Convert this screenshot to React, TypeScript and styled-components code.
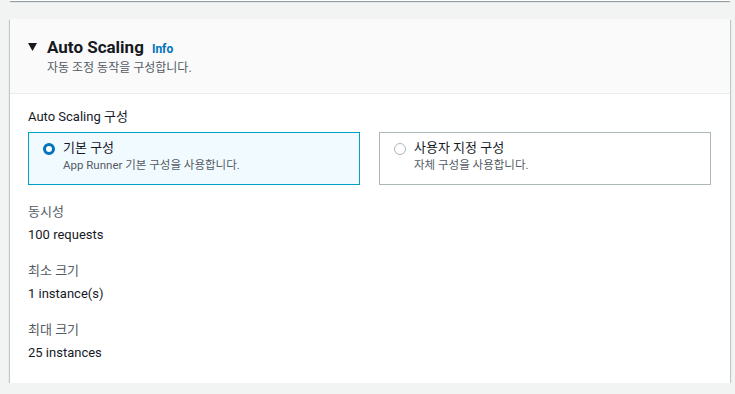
import React from "react";
import styled, { createGlobalStyle } from "styled-components";

const Global = createGlobalStyle`
  html, body { margin: 0; padding: 0; background: #f2f3f3; }
  body { font-family: Roboto, "Noto Sans CJK KR", sans-serif; color: #16191f; }
`;

const Page = styled.div`
  padding: 0 5px 0 10px;
  display: flex;
  flex-direction: column;
  gap: 18px;
`;

const PrevCard = styled.div`
  height: 1px;
  background: #fff;
  box-shadow: 0 1px 1px 0 rgba(0, 28, 36, 0.5);
`;

const Card = styled.section`
  background: #fff;
  box-shadow: 0 1px 1px 0 rgba(0, 28, 36, 0.4), 1px 1px 1px 0 rgba(0, 28, 36, 0.15),
    -1px 1px 1px 0 rgba(0, 28, 36, 0.15);
`;

const Header = styled.header`
  background: #fafafa;
  border-bottom: 1px solid #eaeded;
  padding: 17px 20px 17px 18px;
  display: flex;
  gap: 10px;
`;

const Caret = styled.svg`
  width: 9px;
  height: 8px;
  margin-top: 7px;
  flex-shrink: 0;
`;

const HeadText = styled.div`
  display: flex;
  flex-direction: column;
`;

const TitleRow = styled.div`
  display: flex;
  align-items: baseline;
  gap: 8px;
`;

const Title = styled.h2`
  margin: 0;
  font-size: 17px;
  font-weight: 700;
  line-height: 22px;
  color: #16191f;
`;

const Info = styled.a`
  font-size: 12px;
  font-weight: 700;
  color: #0073bb;
  text-decoration: none;
`;

const Sub = styled.p`
  margin: 2px 0 0;
  font-size: 12px;
  line-height: 16px;
  color: #545b64;
`;

const Body = styled.div`
  padding: 13px 19px 20px 18px;
  display: flex;
  flex-direction: column;
`;

const FieldLabel = styled.div`
  font-size: 13px;
  line-height: 20px;
  color: #16191f;
`;

const Tiles = styled.div`
  display: grid;
  grid-template-columns: 1fr 1fr;
  gap: 19px;
  margin-top: 5px;
`;

const Tile = styled.label<{ $selected?: boolean }>`
  display: flex;
  gap: 8px;
  padding: 6px 14px 0 14px;
  height: 53px;
  box-sizing: border-box;
  border: 1px solid ${(p) => (p.$selected ? "#00a1c9" : "#aab7b8")};
  background: ${(p) => (p.$selected ? "#f1faff" : "#fff")};
`;

const Radio = styled.span<{ $checked?: boolean }>`
  width: 12px;
  height: 12px;
  border-radius: 50%;
  margin-top: 4px;
  box-sizing: border-box;
  flex-shrink: 0;
  border: ${(p) => (p.$checked ? "3.5px solid #0073bb" : "1px solid #aab7b8")};
  background: #fff;
`;

const TileText = styled.div`
  display: flex;
  flex-direction: column;
`;

const TileTitle = styled.div`
  font-size: 13px;
  line-height: 18px;
  color: #16191f;
`;

const TileDesc = styled.div`
  font-size: 11.5px;
  line-height: 16px;
  color: #545b64;
`;

const Stats = styled.div`
  display: flex;
  flex-direction: column;
  gap: 16px;
  margin-top: 17px;
`;

const Stat = styled.div`
  display: flex;
  flex-direction: column;
  gap: 3px;
`;

const StatLabel = styled.div`
  font-size: 13px;
  line-height: 20px;
  color: #545b64;
`;

const StatValue = styled.div`
  font-size: 13px;
  line-height: 20px;
  color: #16191f;
`;

const stats = [
  { label: "동시성", value: "100 requests" },
  { label: "최소 크기", value: "1 instance(s)" },
  { label: "최대 크기", value: "25 instances" },
];

export default function App() {
  return (
    <>
      <Global />
      <Page>
        <PrevCard />
        <Card>
          <Header>
            <Caret viewBox="0 0 9 8">
              <path d="M0 0 H9 L4.5 8 Z" fill="#16191f" />
            </Caret>
            <HeadText>
              <TitleRow>
                <Title>Auto Scaling</Title>
                <Info>Info</Info>
              </TitleRow>
              <Sub>자동 조정 동작을 구성합니다.</Sub>
            </HeadText>
          </Header>
          <Body>
            <FieldLabel>Auto Scaling 구성</FieldLabel>
            <Tiles>
              <Tile $selected>
                <Radio $checked />
                <TileText>
                  <TileTitle>기본 구성</TileTitle>
                  <TileDesc>App Runner 기본 구성을 사용합니다.</TileDesc>
                </TileText>
              </Tile>
              <Tile>
                <Radio />
                <TileText>
                  <TileTitle>사용자 지정 구성</TileTitle>
                  <TileDesc>자체 구성을 사용합니다.</TileDesc>
                </TileText>
              </Tile>
            </Tiles>
            <Stats>
              {stats.map((s) => (
                <Stat key={s.label}>
                  <StatLabel>{s.label}</StatLabel>
                  <StatValue>{s.value}</StatValue>
                </Stat>
              ))}
            </Stats>
          </Body>
        </Card>
      </Page>
    </>
  );
}
